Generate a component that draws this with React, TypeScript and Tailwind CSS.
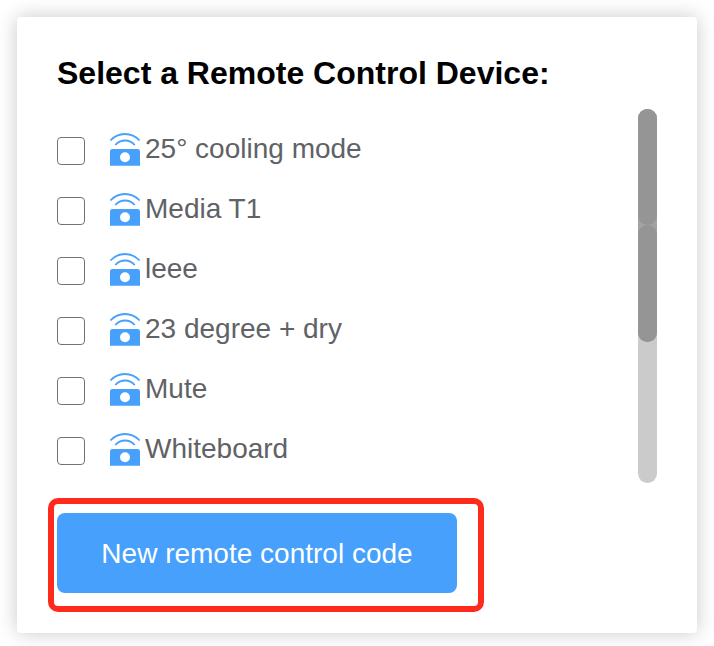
const devices = ["25° cooling mode", "Media T1", "leee", "23 degree + dry", "Mute", "Whiteboard"];

function RemoteIcon() {
  return (
    <svg className="ml-[25px] h-[34px] w-[30px] shrink-0 overflow-visible" viewBox="0 1 30 34" fill="none">
      <path d="M0.400 7.500C8.500 -1.200 21.500 -1.200 29.600 7.500" stroke="#46a0fc" strokeWidth="1.8" />
      <path d="M5.300 12C10.500 6 19.500 6 24.700 12" stroke="#46a0fc" strokeWidth="1.800" />
      <path fillRule="evenodd" clipRule="evenodd" d="M2.500 16h25a2.500 2.500 0 0 1 2.500 2.500V32.700H0V18.500a2.500 2.500 0 0 1 2.500-2.500ZM15 19.300a5 5 0 1 0 0 10a5 5 0 0 0 0-10Z" fill="#46a0fc" />
    </svg>
  );
}

export default function App() {
  return (
    <div className="h-[646px] w-[714px] overflow-hidden bg-white p-[17px] font-['Liberation_Sans',Arial,sans-serif]">
      <main className="h-[616px] w-[680px] rounded-[4px] bg-white px-10 pt-[38px] shadow-[0_0_20px_rgba(0,0,0,0.22)]">
        <h1 className="h-[54px] whitespace-nowrap text-[32px] leading-[37px] font-bold text-black">Select a Remote Control Device:</h1>
        <div className="flex h-[374px] justify-between">
          <div className="pt-[12px]">
            {devices.map((name) => (
              <label key={name} className="flex h-[60px] items-center">
                <input type="checkbox" className="size-7 shrink-0 appearance-none rounded-[4px] border border-[#72727f] bg-white" />
                <RemoteIcon />
                <span className="ml-[5px] pb-[4px] whitespace-nowrap text-[28px] leading-8 text-[#606266]">{name}</span>
              </label>
            ))}
          </div>
          <div className="h-[374px] w-[19px] rounded-full bg-[#cbcbcb]">
            <div className="h-[233px] rounded-[9.5px] bg-[#a3a3a3]">
              <div className="h-[116px] rounded-[9.5px] bg-[#959595]" />
              <div className="h-[117px] rounded-[9.5px] bg-[#959595]" />
            </div>
          </div>
        </div>
        <div className="mt-[15px] -ml-[9px] flex h-[114px] w-[436px] rounded-[10px] border-[6px] border-[#fe2b1d] pt-[9px] pl-[3px]">
          <button className="h-20 w-[400px] rounded-[8px] bg-[#46a0fc] pt-[2px] text-[28px] text-white">New remote control code</button>
        </div>
      </main>
    </div>
  );
}
